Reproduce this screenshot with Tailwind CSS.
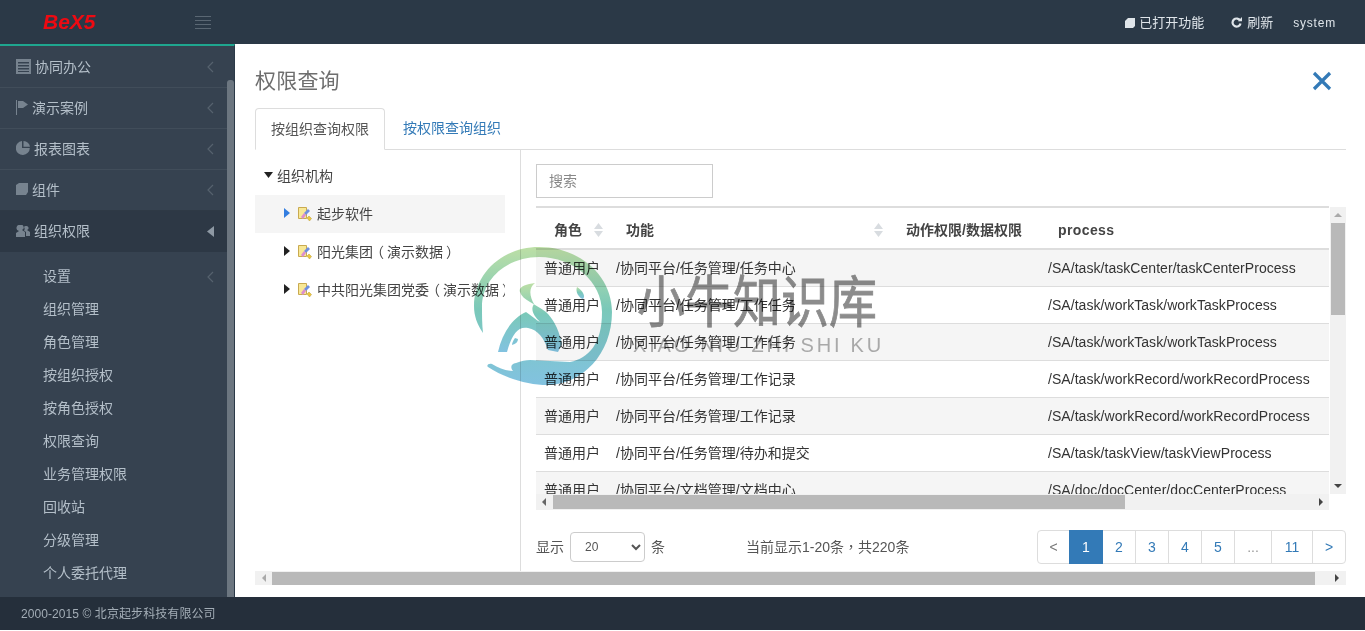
<!DOCTYPE html>
<html lang="zh-CN">
<head>
<meta charset="UTF-8" />
<title>权限查询</title>
<script src="https://cdn.jsdelivr.net/npm/@tailwindcss/browser@4"></script>
</head>
<body class="bg-white font-['Liberation_Sans','Noto_Sans_CJK_SC',sans-serif] text-[14px] text-[#333]">
<div class="relative flex flex-col h-[631px] w-[1365px] overflow-hidden">
    <!-- top bar -->
    <header class="flex items-center h-[44px] shrink-0 bg-[#2b3947]">
        <div class="w-[235px] flex items-center shrink-0">
            <span class="ml-[43px] w-[152px] text-[21px] leading-none font-bold italic text-[#ee0a12] -mt-[2px]">BeX5</span>
            <span class="flex flex-col gap-[3px] w-[16px]">
                <i class="h-px bg-[#5a6773]"></i><i class="h-px bg-[#5a6773]"></i><i class="h-px bg-[#5a6773]"></i><i class="h-px bg-[#5a6773]"></i>
            </span>
        </div>
        <div class="ml-auto flex items-center pr-[29px] pt-px text-[#dfe5ea]">
            <svg class="w-[10px] h-[10px] mr-[4px]" viewBox="0 0 10 10"><path fill="#dfe5ea" d="M3 0h7v8l-2 2H0V3z"/></svg>
            <span class="text-[13px]">已打开功能</span>
            <svg class="w-[11px] h-[11px] ml-[27px] mr-[5px]" viewBox="0 0 12 12"><path fill="none" stroke="#dfe5ea" stroke-width="2.400" d="M10 4A4.400 4.400 0 1 0 10.400 7"/><path fill="#dfe5ea" d="M7.500 4.500h4.500V0z"/></svg>
            <span class="text-[13px]">刷新</span>
            <span class="ml-[20px] text-[12px] tracking-[0.8px]">system</span>
        </div>
    </header>

    <div class="flex flex-1 min-h-0">
        <!-- left menu -->
        <aside class="relative w-[235px] shrink-0 bg-[#364250] border-t-2 border-t-[#1fa68f] border-r border-r-[#2b3947] text-[#b4bfc9] overflow-hidden">
            <ul>
                <li class="flex items-center h-[42px] pt-px pl-[16px] border-b border-[#414d5a]">
                    <svg class="w-[15px] h-[15px] mr-[4px] -mt-[2px]" viewBox="0 0 15 15"><path fill="#77838f" d="M0 0h15v15H0zM2 3v1.500h11V3zM2 6v1.500h11V6zM2 9v1.500h11V9zM2 12v1h11v-1z" fill-rule="evenodd"/></svg>
                    <span>协同办公</span>
                    <svg class="ml-auto mr-[20px] w-[8px] h-[12px]" viewBox="0 0 8 12"><path fill="none" stroke="#56626e" stroke-width="1.200" d="M7 1 2 6l5 5"/></svg>
                </li>
                <li class="flex items-center h-[41px] pl-[16px] border-b border-[#414d5a]">
                    <svg class="w-[12px] h-[15px] mr-[4px] -mt-[2px]" viewBox="0 0 12 15"><path fill="#77838f" d="M0 0h1v15H0zM2 1h5l5 3.500L7 8H2z"/></svg>
                    <span>演示案例</span>
                    <svg class="ml-auto mr-[20px] w-[8px] h-[12px]" viewBox="0 0 8 12"><path fill="none" stroke="#56626e" stroke-width="1.200" d="M7 1 2 6l5 5"/></svg>
                </li>
                <li class="flex items-center h-[41px] pl-[16px] border-b border-[#414d5a]">
                    <svg class="w-[14px] h-[14px] mr-[4px] -mt-[2px]" viewBox="0 0 14 14"><path fill="#77838f" d="M6 0v7h7.800A7 7 0 1 1 6 0zM7.500 0A6.500 6.500 0 0 1 14 5.800H7.500z"/></svg>
                    <span>报表图表</span>
                    <svg class="ml-auto mr-[20px] w-[8px] h-[12px]" viewBox="0 0 8 12"><path fill="none" stroke="#56626e" stroke-width="1.200" d="M7 1 2 6l5 5"/></svg>
                </li>
                <li class="flex items-center h-[41px] pl-[16px] border-b border-[#2e3945]">
                    <svg class="w-[12px] h-[12px] mr-[4px] -mt-[2px]" viewBox="0 0 12 12"><path fill="#77838f" d="M3 0h9v9l-2 3H0V2z"/></svg>
                    <span>组件</span>
                    <svg class="ml-auto mr-[20px] w-[8px] h-[12px]" viewBox="0 0 8 12"><path fill="none" stroke="#56626e" stroke-width="1.200" d="M7 1 2 6l5 5"/></svg>
                </li>
                <li class="flex items-center h-[41px] pl-[16px] bg-[#2d3845]">
                    <svg class="w-[14px] h-[12px] mr-[4px] -mt-[2px]" viewBox="0 0 14 12"><path fill="#77838f" d="M4 0a2.500 2.500 0 0 1 2 5l3 2v5H0V8l3-2A3 3 0 0 1 4 0zM10 1a2 2 0 0 1 1 4l3 2v4h-4V7L8 5.500A3 3 0 0 0 8 2a2 2 0 0 1 2-1z"/></svg>
                    <span>组织权限</span>
                    <svg class="ml-auto mr-[20px] w-[7px] h-[11px]" viewBox="0 0 7 11"><path fill="#8e99a4" d="M7 0v11L0 5.500z"/></svg>
                </li>
            </ul>
            <ul class="pt-[8px] pl-[43px]">
                <li class="flex items-center h-[33px]">设置<svg class="ml-auto mr-[20px] w-[8px] h-[12px]" viewBox="0 0 8 12"><path fill="none" stroke="#56626e" stroke-width="1.200" d="M7 1 2 6l5 5"/></svg></li>
                <li class="flex items-center h-[33px]">组织管理</li>
                <li class="flex items-center h-[33px]">角色管理</li>
                <li class="flex items-center h-[33px]">按组织授权</li>
                <li class="flex items-center h-[33px]">按角色授权</li>
                <li class="flex items-center h-[33px]">权限查询</li>
                <li class="flex items-center h-[33px]">业务管理权限</li>
                <li class="flex items-center h-[33px]">回收站</li>
                <li class="flex items-center h-[33px]">分级管理</li>
                <li class="flex items-center h-[33px]">个人委托代理</li>
            </ul>
            <div class="absolute right-0 top-[34px] bottom-0 w-[7px] rounded-t-[3px] bg-[#6c7680]"></div>
        </aside>

        <!-- content -->
        <main class="flex-1 min-w-0 flex flex-col pl-[20px] pr-[19px]">
            <div class="flex items-center justify-between h-[64px] pt-[10px] shrink-0 pr-[14px]">
                <h1 class="text-[21px] tracking-[0.2px] text-[#6e6e6e] font-normal">权限查询</h1>
                <svg class="w-[20px] h-[20px]" viewBox="0 0 20 20"><path fill="none" stroke="#337ab7" stroke-width="3.200" d="M2 2l16 16M18 2 2 18"/></svg>
            </div>
            <div class="flex h-[42px] shrink-0 border-b border-[#ddd]">
                <div class="flex items-center justify-center w-[130px] h-[42px] bg-white border border-[#ddd] border-b-white rounded-t-[4px] text-[#555]">按组织查询权限</div>
                <div class="flex items-center ml-[18px] text-[#337ab7]">按权限查询组织</div>
            </div>
            <div class="flex flex-1 min-h-0">
                <!-- org tree -->
                <div class="w-[266px] shrink-0 border-r border-[#ddd] pt-[7px] text-[#444]">
                    <div class="flex items-center h-[38px] pl-[9px]">
                        <svg class="w-[9px] h-[6px] mr-[4px] -mt-[3px]" viewBox="0 0 9 6"><path fill="#222" d="M0 0h9L4.500 6z"/></svg>组织机构
                    </div>
                    <div class="flex items-center h-[38px] w-[250px] pl-[29px] bg-[#f5f5f5]">
                        <svg class="w-[6px] h-[10px] mr-[7px] -mt-[3px]" viewBox="0 0 6 10"><path fill="#337ee0" d="M0 0l6 5-6 5z"/></svg>
                        <svg class="w-[15px] h-[16px] mr-[5px]" viewBox="0 0 15 16"><path fill="#f8e896" stroke="#c9aa50" d="M1.500 1.500h8v11h-8z"/><path fill="#6f8fe0" d="m7 7 4-4 2 2-4 4z"/><path fill="#dc8fd0" d="m4 11 3-4 2 2-3 4z"/><path fill="#ecc83c" stroke="#b99a3c" stroke-width=".5" d="m10 12 2-2 2.500 2.500-2 2.500z"/></svg>
                        起步软件
                    </div>
                    <div class="flex items-center h-[38px] w-[250px] pl-[29px]">
                        <svg class="w-[6px] h-[10px] mr-[7px] -mt-[3px]" viewBox="0 0 6 10"><path fill="#222" d="M0 0l6 5-6 5z"/></svg>
                        <svg class="w-[15px] h-[16px] mr-[5px]" viewBox="0 0 15 16"><path fill="#f8e896" stroke="#c9aa50" d="M1.500 1.500h8v11h-8z"/><path fill="#6f8fe0" d="m7 7 4-4 2 2-4 4z"/><path fill="#dc8fd0" d="m4 11 3-4 2 2-3 4z"/><path fill="#ecc83c" stroke="#b99a3c" stroke-width=".5" d="m10 12 2-2 2.500 2.500-2 2.500z"/></svg>
                        <span>阳光集团<span class="inline-block -translate-x-[3px]">（</span>演示数据<span class="inline-block translate-x-[3px]">）</span></span>
                    </div>
                    <div class="flex items-center h-[38px] w-[250px] pl-[29px] overflow-hidden whitespace-nowrap">
                        <svg class="w-[6px] h-[10px] mr-[7px] -mt-[3px] shrink-0" viewBox="0 0 6 10"><path fill="#222" d="M0 0l6 5-6 5z"/></svg>
                        <svg class="w-[15px] h-[16px] mr-[5px] shrink-0" viewBox="0 0 15 16"><path fill="#f8e896" stroke="#c9aa50" d="M1.500 1.500h8v11h-8z"/><path fill="#6f8fe0" d="m7 7 4-4 2 2-4 4z"/><path fill="#dc8fd0" d="m4 11 3-4 2 2-3 4z"/><path fill="#ecc83c" stroke="#b99a3c" stroke-width=".5" d="m10 12 2-2 2.500 2.500-2 2.500z"/></svg>
                        <span>中共阳光集团党委<span class="inline-block -translate-x-[3px]">（</span>演示数据<span class="inline-block translate-x-[3px]">）</span></span>
                    </div>
                </div>

                <!-- permission table -->
                <div class="flex-1 min-w-0 pl-[15px] flex flex-col">
                    <input type="text" placeholder="搜索" class="mt-[14px] w-[177px] h-[34px] shrink-0 px-[12px] border border-[#ccc] text-[14px] placeholder:text-[#888]" />
                    <div class="flex mt-[8px] h-[304px] shrink-0">
                        <div class="w-[793px] shrink-0 flex flex-col">
                            <div class="h-[288px] shrink-0 overflow-hidden border-t-2 border-[#ddd]">
                                <table class="table-fixed w-[793px] border-collapse">
                                    <colgroup><col class="w-[72px]" /><col class="w-[280px]" /><col class="w-[152px]" /><col /></colgroup>
                                    <thead>
                                        <tr class="h-[41px] border-b-2 border-[#ddd] text-left font-bold">
                                            <th class="relative pl-[18px] pt-[4px] font-bold text-[#444]">角色<svg class="absolute right-[5px] top-[15px] w-[9px] h-[14px]" viewBox="0 0 9 14"><path fill="#d8dce0" d="M4.500 0 9 6H0zM0 8h9l-4.500 6z"/></svg></th>
                                            <th class="relative pl-[18px] pt-[4px] font-bold text-[#444]">功能<svg class="absolute right-[5px] top-[15px] w-[9px] h-[14px]" viewBox="0 0 9 14"><path fill="#d8dce0" d="M4.500 0 9 6H0zM0 8h9l-4.500 6z"/></svg></th>
                                            <th class="pl-[18px] pt-[4px] font-bold text-[#444]">动作权限/数据权限</th>
                                            <th class="pl-[18px] pt-[4px] font-bold text-[#444] tracking-[0.4px]">process</th>
                                        </tr>
                                    </thead>
                                    <tbody>
                                        <tr class="h-[37px] bg-[#f5f5f5] border-b border-[#ddd]"><td class="pl-[8px] pt-px">普通用户</td><td class="pl-[8px] pt-px">/协同平台/任务管理/任务中心</td><td></td><td class="pl-[8px] pt-px tracking-[0.05px]">/SA/task/taskCenter/taskCenterProcess</td></tr>
                                        <tr class="h-[37px] border-b border-[#ddd]"><td class="pl-[8px] pt-px">普通用户</td><td class="pl-[8px] pt-px">/协同平台/任务管理/工作任务</td><td></td><td class="pl-[8px] pt-px tracking-[0.05px]">/SA/task/workTask/workTaskProcess</td></tr>
                                        <tr class="h-[37px] bg-[#f5f5f5] border-b border-[#ddd]"><td class="pl-[8px] pt-px">普通用户</td><td class="pl-[8px] pt-px">/协同平台/任务管理/工作任务</td><td></td><td class="pl-[8px] pt-px tracking-[0.05px]">/SA/task/workTask/workTaskProcess</td></tr>
                                        <tr class="h-[37px] border-b border-[#ddd]"><td class="pl-[8px] pt-px">普通用户</td><td class="pl-[8px] pt-px">/协同平台/任务管理/工作记录</td><td></td><td class="pl-[8px] pt-px tracking-[0.05px]">/SA/task/workRecord/workRecordProcess</td></tr>
                                        <tr class="h-[37px] bg-[#f5f5f5] border-b border-[#ddd]"><td class="pl-[8px] pt-px">普通用户</td><td class="pl-[8px] pt-px">/协同平台/任务管理/工作记录</td><td></td><td class="pl-[8px] pt-px tracking-[0.05px]">/SA/task/workRecord/workRecordProcess</td></tr>
                                        <tr class="h-[37px] border-b border-[#ddd]"><td class="pl-[8px] pt-px">普通用户</td><td class="pl-[8px] pt-px">/协同平台/任务管理/待办和提交</td><td></td><td class="pl-[8px] pt-px tracking-[0.05px]">/SA/task/taskView/taskViewProcess</td></tr>
                                        <tr class="h-[37px] bg-[#f5f5f5]"><td class="pl-[8px] pt-px">普通用户</td><td class="pl-[8px] pt-px">/协同平台/文档管理/文档中心</td><td></td><td class="pl-[8px] pt-px tracking-[0.05px]">/SA/doc/docCenter/docCenterProcess</td></tr>
                                    </tbody>
                                </table>
                            </div>
                            <!-- inner horizontal scrollbar -->
                            <div class="flex items-center h-[16px] shrink-0 bg-[#f1f1f1]">
                                <svg class="w-[17px] h-[8px]" viewBox="0 0 17 8"><path fill="#666" d="M10 0v8L6 4z"/></svg>
                                <div class="w-[572px] h-[14px] bg-[#b9b9b9]"></div>
                                <svg class="ml-auto w-[17px] h-[8px]" viewBox="0 0 17 8"><path fill="#444" d="M7 0v8l4-4z"/></svg>
                            </div>
                        </div>
                        <!-- inner vertical scrollbar -->
                        <div class="flex flex-col items-center w-[16px] h-[287px] mt-px ml-px bg-[#f1f1f1]">
                            <svg class="w-[8px] h-[16px] shrink-0" viewBox="0 0 8 16"><path fill="#aaa" d="M0 10h8L4 6z"/></svg>
                            <div class="w-[14px] h-[92px] bg-[#b9b9b9]"></div>
                            <svg class="mt-auto w-[8px] h-[16px] shrink-0" viewBox="0 0 8 16"><path fill="#444" d="M0 6h8l-4 4z"/></svg>
                        </div>
                    </div>
                    <!-- pager row -->
                    <div class="flex items-center mt-[20px] text-[#555]">
                        <span>显示</span>
                        <select class="ml-[6px] w-[75px] h-[30px] pl-[10px] bg-white border border-[#ccc] rounded-[4px] text-[12px] text-[#555]"><option>20</option></select>
                        <span class="ml-[6px]">条</span>
                        <span class="ml-[81px]">当前显示1-20条<span lang="zh-TW" class="font-['Noto_Sans_CJK_TC']">，</span>共220条</span>
                        <div class="ml-auto flex h-[34px] border border-[#ddd] rounded-[4px] text-[#337ab7]">
                            <span class="flex items-center justify-center w-[31px] text-[#777]">&lt;</span>
                            <span class="flex items-center justify-center w-[34px] -my-px bg-[#337ab7] text-white">1</span>
                            <span class="flex items-center justify-center w-[33px] border-r border-[#ddd]">2</span>
                            <span class="flex items-center justify-center w-[33px] border-r border-[#ddd]">3</span>
                            <span class="flex items-center justify-center w-[33px] border-r border-[#ddd]">4</span>
                            <span class="flex items-center justify-center w-[33px] border-r border-[#ddd]">5</span>
                            <span class="flex items-center justify-center w-[37px] border-r border-[#ddd] text-[#999]">...</span>
                            <span class="flex items-center justify-center w-[41px] border-r border-[#ddd]">11</span>
                            <span class="flex items-center justify-center w-[32px]">&gt;</span>
                        </div>
                    </div>
                </div>
            </div>
            <!-- outer horizontal scrollbar -->
            <div class="flex items-center h-[14px] mb-[12px] shrink-0 bg-[#f1f1f1]">
                <svg class="w-[17px] h-[8px]" viewBox="0 0 17 8"><path fill="#aaa" d="M11 0v8L7 4z"/></svg>
                <div class="w-[1043px] h-[13px] bg-[#b9b9b9]"></div>
                <svg class="ml-auto w-[20px] h-[8px]" viewBox="0 0 20 8"><path fill="#444" d="M9 0v8l4-4z"/></svg>
            </div>
        </main>
    </div>

    <footer class="flex items-center h-[33px] mb-px shrink-0 pl-[21px] bg-[#252f3b] text-[12px] tracking-[0.08px] text-[#a3adb6]">2000-2015 © 北京起步科技有限公司</footer>

    <!-- watermark over the page -->
    <div class="absolute left-[474px] top-[246px] w-[420px] h-[142px] pointer-events-none mix-blend-multiply">
        <svg class="absolute left-0 top-0 w-[138px] h-[140px] opacity-90" viewBox="0 0 138 140">
            <defs><linearGradient id="wm" x1="0" y1="0" x2="0" y2="1"><stop offset="0" stop-color="#b6dc9c"/><stop offset=".45" stop-color="#6cc3b2"/><stop offset="1" stop-color="#75bcdd"/></linearGradient></defs>
            <path fill="url(#wm)" d="M9 87C3 78 0 70 0 60 0 28 28 1 65 1c41 0 73 29 73 65 0 42-30 73-65 73-18 0-43-7-59-18-2-2 1-4 4-3 7 4 14 7 21 7-3-4-2-7 3-8 5-2 10-3 14-3L96 116C115 112 128 98 128 66 128 36 100 11 65 11 34 11 8 32 8 61c0 9 0 17 1 26z"/>
            <path fill="url(#wm)" fill-rule="evenodd" d="M61 37c-9 1-17 4-15 9 2 8 16 12 26 20 6 6 12 14 16 32l-4 8-10-2c-4-12-10-20-20-22-10-2-16 6-21 24h-9c4-18 14-34 28-40 6 4 10 8 14 10-6-6-10-12-6-18-4-7-6-16 1-21zM41 92c-2 3-3 5-3 7 4-1 6-3 6-6z"/>
            <path fill="url(#wm)" d="M103 41c5 3 9 9 6 12-4-1-8-7-6-12z"/>
        </svg>
        <span class="absolute left-[163px] top-[34px] text-[48px] leading-none whitespace-nowrap scale-y-[1.15] [-webkit-text-stroke:0.7px_#8c8c8c] text-[#8c8c8c]">小牛知识库</span>
        <span class="absolute left-[159px] top-[89px] text-[20px] leading-none tracking-[2.800px] whitespace-nowrap text-[#b0b0b0]">XIAO NIU ZHI SHI KU</span>
    </div>
</div>
</body>
</html>
